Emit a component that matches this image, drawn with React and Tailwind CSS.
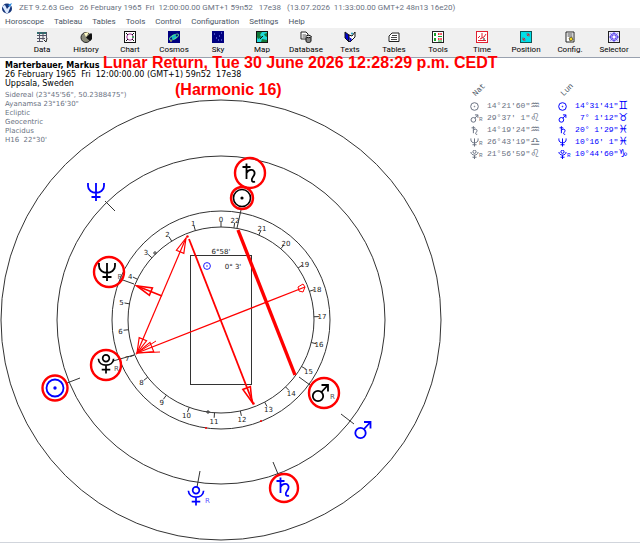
import clsx from 'clsx';

const MENU = ['Horoscope', 'Tableau', 'Tables', 'Tools', 'Control', 'Configuration', 'Settings', 'Help'];

const TOOLBAR = [
  'Data',
  'History',
  'Chart',
  'Cosmos',
  'Sky',
  'Map',
  'Database',
  'Texts',
  'Tables',
  'Tools',
  'Time',
  'Position',
  'Config.',
  'Selector',
];

const SETTINGS = ['Sidereal (23°45\'56", 50.2388475")', 'Ayanamsa 23°16\'30"', 'Ecliptic', 'Geocentric', 'Placidus', "H16  22°30'"];

const NATAL = [
  { planet: 'sun', pos: '14°21\'60"', sign: '♒' },
  { planet: 'mars', retro: true, pos: '29°37\' 1"', sign: '♌' },
  { planet: 'saturn', pos: '14°19\'24"', sign: '♒' },
  { planet: 'neptune', retro: true, pos: '26°43\'19"', sign: '♎' },
  { planet: 'pluto', retro: true, pos: '21°56\'59"', sign: '♌' },
];

const LUNAR = [
  { planet: 'sun', pos: '14°31\'41"', sign: '♊' },
  { planet: 'mars', pos: ' 7° 1\'12"', sign: '♉' },
  { planet: 'saturn', pos: '20° 1\'29"', sign: '♓' },
  { planet: 'neptune', pos: '10°16\' 1"', sign: '♓' },
  { planet: 'pluto', retro: true, pos: '10°44\'60"', sign: '♑' },
];

// Chart centre and the radii of the two scale rings
const CX = 221;
const CY = 320;
const R_INNER = 93;
const R_LABEL = 101;

const BLUE = '#0000ff';
const RED = '#ff0000';

// Symbols are drawn in a box of 20 x 20 around the origin
const PLANETS = {
  sun: (
    <>
      <circle r="8.5" />
      <circle r="0.8" />
    </>
  ),
  mars: (
    <>
      <circle cx="-2.5" cy="3" r="5.2" />
      <path d="M1 -1 L7.5 -8 M1 -8 H7.5 V-1.5" />
    </>
  ),
  saturn: <path d="M-6.5 -6 H1.5 M-2.5 -9.5 V6 M-2.5 0 C0 -5 6.500 -3.500 5.500 1 C5 4 1.500 5 3 8 Q4 9.500 6 8.500" />,
  neptune: <path d="M-8 -9 V-6 C-8 3 8 3 8 -6 V-9 M0 -9 V9 M-4.500 5 H4.500" />,
  pluto: (
    <>
      <circle cy="-6" r="3.5" />
      <path d="M-8 -5.500 C-7.500 3.500 7.500 3.500 8 -5.500 M0 1.500 V10 M-4.500 6 H4.500" />
    </>
  ),
};

function Planet({ name, x, y, scale = 1, color = 'black', width = 1.8 }) {
  return (
    <g transform={`translate(${x} ${y}) scale(${scale})`} fill="none" stroke={color} strokeWidth={width}>
      {PLANETS[name]}
    </g>
  );
}

function Ring({ x, y, r }) {
  return <circle cx={x} cy={y} r={r} fill="none" stroke={RED} strokeWidth="2.4" />;
}

function ArrowHead({ x, y, angle, length = 15, half = 4, width = 1.2 }) {
  return (
    <path
      d={`M0 0 L${-length} ${-half} V${half} Z`}
      transform={`translate(${x} ${y}) rotate(${angle})`}
      fill="none"
      stroke={RED}
      strokeWidth={width}
    />
  );
}

function Scale() {
  return Array.from({ length: 23 }, (_, n) => {
    const a = (n * 16 * Math.PI) / 180;
    const sin = Math.sin(a);
    const cos = Math.cos(a);
    return (
      <g key={n}>
        <line
          x1={CX - R_INNER * sin}
          y1={CY - R_INNER * cos}
          x2={CX - (R_INNER + 5) * sin}
          y2={CY - (R_INNER + 5) * cos}
          stroke="#333"
        />
        <text x={CX - R_LABEL * sin} y={CY - R_LABEL * cos + 3} textAnchor="middle">
          {n}
        </text>
      </g>
    );
  });
}

function Chart() {
  return (
    <svg
      viewBox="0 58 442 484"
      className="col-start-1 row-start-1 w-[442px] max-w-full"
      fontFamily="'DejaVu Sans', sans-serif"
      fontSize="7"
      fill="#222"
      role="img"
    >
      <g fill="none" stroke="#333">
        <circle cx={CX} cy={CY} r="220" />
        <circle cx={CX} cy={CY} r="164" />
        <circle cx={CX} cy={CY} r="109" />
        <circle cx={CX} cy={CY} r={R_INNER} />
        <rect x="190.5" y="255.5" width="61" height="129" />
        <path d="M105 201 L115 211 M67 383 L80 378 M200 471 L197 487 M273 462 L278 474 M341 414 L354 424" />
        <path d="M120 279 L134 284 M113 361 L134 355 M241 210 L237 228 M299 377 L310 385" />
        <circle cx="155" cy="253" r="1.2" />
        <circle cx="208" cy="412" r="1.2" />
      </g>
      <Scale />

      <g textAnchor="middle">
        <text x="221" y="254">6°58'</text>
        <text x="233" y="269">0° 3'</text>
        <text x="120" y="279" fill="#555">R</text>
      </g>
      <Planet name="sun" x={207} y={266} scale={0.4} color={BLUE} width={2.2} />

      <g stroke={RED} fill="none">
        <path d="M238 230 L295 375" strokeWidth="3.4" />
        <path d="M189 239 L253 403" strokeWidth="1.8" />
        <path d="M186 238 L137 353" strokeWidth="1.2" />
        <path d="M137 353 L305 287" strokeWidth="1.3" />
        <path d="M162 296 L137 286" strokeWidth="1.8" />
        <path d="M298 287 L303 284 L305 287 L303 292 L299 291 Z" />
        <path d="M137 353 L160 352 M137 353 L156 341" />
      </g>
      <ArrowHead x={186} y={238} angle={-67} />
      <ArrowHead x={137} y={353} angle={113} />
      <ArrowHead x={137} y={353} angle={158} length={16} half={5} />
      <ArrowHead x={137} y={286} angle={202} width={1.6} />
      <ArrowHead x={252} y={402} angle={69} width={1.6} />
      <g fill={RED}>
        <circle cx="187.500" cy="236.500" r="1.2" />
        <circle cx="253.500" cy="403.500" r="1.2" />
        <circle cx="206" cy="428" r="1" />
        <circle cx="261" cy="421" r="1" />
      </g>

      <Ring x={250} y={173} r={15} />
      <Planet name="saturn" x={249} y={173} />
      <Ring x={242} y={198} r={11} />
      <Planet name="sun" x={242} y={198} width={1.6} />
      <Ring x={109} y={272} r={15} />
      <Planet name="neptune" x={107} y={272} />
      <Ring x={106} y={365} r={15} />
      <Planet name="pluto" x={106} y={364} scale={0.95} />
      <text x="114" y="371" fill="#555">R</text>
      <Ring x={324} y={393} r={15} />
      <Planet name="mars" x={320.5} y={393} />
      <text x="330" y="399" fill="#555">R</text>

      <Planet name="neptune" x={96} y={192} color={BLUE} />
      <Ring x={55} y={388} r={12.500} />
      <Planet name="sun" x={55} y={388} color={BLUE} />
      <Planet name="pluto" x={196} y={496} scale={0.95} color={BLUE} />
      <text x="205" y="503" fill={BLUE} fillOpacity="0.7">R</text>
      <Ring x={284} y={488} r={14} />
      <Planet name="saturn" x={283} y={487} color={BLUE} />
      <Planet name="mars" x={363} y={430} color={BLUE} />
    </svg>
  );
}

// 12 x 12 toolbar pictures
const ICONS = {
  Data: (
    <>
      <rect x="1" y="1" width="10" height="2" fill="#2f6f6f" />
      <path d="M1 4.500 H11 M1 7.500 H9 M1 10.500 H7 M3.500 1 V11 M7 1 V9 M10.500 1 V7" stroke="#556" fill="none" />
      <path d="M8 9 L10 11 L11 7" stroke="#222" fill="none" />
    </>
  ),
  History: (
    <>
      <circle cx="6" cy="6.500" r="5" fill="#8b8b7a" stroke="#222" />
      <path d="M6 6.500 L11 2 A5 5 0 0 1 10 10 Z" fill="#111" />
      <path d="M6 6 L4 2 L9 1 Z" fill="#fff9c4" />
    </>
  ),
  Chart: (
    <>
      <rect x="0.5" y="0.5" width="11" height="11" fill="#fff" stroke="#111" />
      <circle cx="6" cy="6" r="3.200" fill="#fff" stroke="#a0309a" />
      <path d="M2 2 L4 4 M10 2 L8 4 M2 10 L4 8 M10 10 L8 8" stroke="#111" />
      <circle cx="9" cy="6" r="1" fill="#1a9b3c" />
    </>
  ),
  Cosmos: (
    <>
      <rect width="12" height="12" fill="#000080" />
      <circle cx="6" cy="6" r="2.500" fill="#15b8c8" />
      <ellipse cx="6" cy="6" rx="5" ry="1.800" transform="rotate(-30 6 6)" fill="none" stroke="#5fe08a" />
      <circle cx="3" cy="10" r="0.8" fill="#ffe14a" />
    </>
  ),
  Sky: (
    <>
      <rect width="12" height="12" fill="#000080" />
      <path d="M2 3 h1 M4 7 h1 M7 5 h1 M9 2 h1 M6 9 h1 M9 9 h1" stroke="#8fa0ff" />
    </>
  ),
  Map: (
    <>
      <rect x="0.5" y="0.5" width="11" height="11" fill="#20d8d8" stroke="#111" />
      <path d="M1 1 H6 L4 4 L6 6 L2 8 L1 6 Z M8 3 L11 2 V6 L9 5 Z M6 8 L11 9 V11 H5 Z" fill="#127a3a" />
      <path d="M4 8 L7 5" stroke="#111" />
    </>
  ),
  Database: (
    <>
      <path d="M1 1 H6 L8 3 V8 H1 Z" fill="#fff" stroke="#222" />
      <path d="M2.500 4 H6 M2.500 6 H5" stroke="#555" />
      <path d="M6 6 V10 C6 12 11 12 11 10 V5" fill="#888" stroke="#111" />
      <ellipse cx="8.500" cy="5.500" rx="2.500" ry="1.200" fill="#ddd" stroke="#111" />
    </>
  ),
  Texts: (
    <>
      <path d="M1 1 L5 4 V11 L1 7 Z" fill="#0000d0" stroke="#111" />
      <path d="M5 4 L8 5 L11 1 L11 6 L6 11 L5 10 Z" fill="#fff" stroke="#111" />
      <path d="M5 6 L8 8 L6 11 Z" fill="#0000d0" />
      <circle cx="8" cy="2.500" r="1" fill="#159fbf" />
    </>
  ),
  Tables: (
    <>
      <path d="M4 2 H11 V10.500 H1 V5 Z" fill="#fff" stroke="#222" />
      <path d="M4 4.500 H9 M3 6.500 H9 M3 8.500 H9" stroke="#444" />
    </>
  ),
  Tools: (
    <>
      <rect x="0.5" y="0.5" width="11" height="11" fill="#fff" stroke="#222" />
      <path d="M3 2 V5 M3 7 V10" stroke="#17a32b" strokeWidth="2" />
      <path d="M6 3 H10 M6 8 H10" stroke="#ef3340" strokeWidth="2" strokeDasharray="1.500 0.8" />
      <path d="M6 5.500 H10 M6 10 H10" stroke="#17a32b" />
    </>
  ),
  Time: (
    <>
      <rect x="0.5" y="0.5" width="11" height="11" fill="#fff" stroke="#e02030" />
      <path d="M6 2 V7 M2 7 L4 5 M4 8 L8 6 L10 3 M2 9.500 H10" stroke="#e02030" fill="none" />
      <path d="M8 7 V9" stroke="#222" />
    </>
  ),
  Position: (
    <>
      <rect x="0.5" y="0.5" width="11" height="11" fill="#00e0e8" stroke="#155" />
      <path d="M3 9 L5 7 M7 5 L9 3 M6.500 3 H9 V5.500 M3 6.500 V9 H5.500" stroke="#d02030" fill="none" />
    </>
  ),
  'Config.': (
    <>
      <path d="M2 1 H10 V11 H2 Z" fill="#fff" stroke="#222" />
      <path d="M3.500 3 H8.500 M3.500 5 H8.500" stroke="#444" />
      <path d="M5 7 L8 6 L9 9 L6 10 Z" fill="#f2d41c" stroke="#222" strokeWidth="0.6" />
    </>
  ),
  Selector: (
    <>
      <rect x="0.5" y="0.5" width="11" height="11" fill="#e9e9ff" stroke="#222" />
      <circle cx="6" cy="6" r="3.500" fill="none" stroke="#3b32e0" />
      <path d="M6 1 V11 M1 6 H11 M2.500 2.500 L9.500 9.500 M9.500 2.500 L2.500 9.500" stroke="#6a4df0" />
      <circle cx="6" cy="6" r="1.200" fill="#fff" />
    </>
  ),
};

function PositionTable({ title, rows, className }) {
  return (
    <table className={clsx("h-fit font-['Liberation_Mono',monospace] text-[8px] leading-3", className)}>
      <thead>
        <tr>
          <th className="h-5 p-0 pl-[2px] text-left align-middle font-normal text-gray-600" colSpan={3}>
            <span className="inline-block -rotate-45">{title}</span>
          </th>
        </tr>
      </thead>
      <tbody>
        {rows.map((row) => (
          <tr key={row.planet}>
            <td className="w-[17px] p-0">
              <span className="flex h-3 items-center">
                <svg viewBox="-10 -10 20 20" className="size-[9px]">
                  <Planet name={row.planet} x={0} y={0} color="currentColor" width={2.2} />
                </svg>
                {row.retro && <span className="pt-[3px] text-[6px] leading-[9px]">R</span>}
              </span>
            </td>
            <td className="h-3 p-0 whitespace-pre">{row.pos}</td>
            <td className="h-3 p-0 font-['DejaVu_Sans',sans-serif] text-[11px] leading-3">{row.sign + '\uFE0E'}</td>
          </tr>
        ))}
      </tbody>
    </table>
  );
}

export default function App() {
  return (
    <div className="min-h-screen bg-white font-['Roboto',sans-serif] text-[8px]">
      <header>
        <div className="flex h-[15px] items-center gap-[6px] pl-px text-gray-500">
          <svg viewBox="0 0 12 12" className="size-3">
            <circle cx="6" cy="6.500" r="5" fill="#16357a" />
            <path d="M1 4 L4 3 L6 7 L11 1 L7 11 H5 Z" fill="#dceaff" />
            <path d="M7 3 L11 1 L9 5 Z" fill="#2b8be0" />
          </svg>
          <h1 className="whitespace-pre">
            {'ZET 9.2.63 Geo   26 February 1965  Fri  12:00:00.00 GMT+1 59n52   17e38   (13.07.2026  11:33:00.00 GMT+2 48n13 16e20)'}
          </h1>
        </div>
        <nav className="flex h-[13px] items-center gap-[10px] pl-[5px] text-gray-600">
          {MENU.map((item) => (
            <button key={item} type="button" className="leading-3">
              {item}
            </button>
          ))}
        </nav>
        <div className="flex h-[30px] border-b border-gray-400 bg-[#f0f0f0] pr-1 pl-5">
          {TOOLBAR.map((item) => (
            <button
              key={item}
              type="button"
              className="flex flex-1 basis-0 flex-col items-center pt-[3px] leading-[14px] text-black"
            >
              <svg viewBox="0 0 12 12" className="size-3">
                {ICONS[item]}
              </svg>
              {item}
            </button>
          ))}
        </div>
      </header>

      <main className="relative flex border-b border-gray-300">
        <div className="grid">
          <Chart />
          <div className="col-start-1 row-start-1 pt-[3px] pl-[5px] font-['DejaVu_Sans',sans-serif] leading-[9px] whitespace-pre">
            <p className="font-bold">Marterbauer, Markus</p>
            <p>26 February 1965  Fri  12:00:00.00 (GMT+1) 59n52  17e38</p>
            <p>Uppsala, Sweden</p>
            <div className="pt-[3px] text-[7px] text-gray-500">
              {SETTINGS.map((line) => (
                <p key={line}>{line}</p>
              ))}
            </div>
          </div>
        </div>
        <h2 className="absolute top-[-9px] left-[103px] font-['Liberation_Sans',sans-serif] text-[16px] leading-[27px] font-bold whitespace-nowrap text-[#ff0000]">
          Lunar Return, Tue 30 June 2026 12:28:29 p.m. CEDT
          <span className="block pl-[72px]">(Harmonic 16)</span>
        </h2>
        <div className="flex flex-1 gap-[18px] pt-[22px] pl-7">
          <PositionTable title="Nat" rows={NATAL} className="text-gray-500" />
          <PositionTable title="Lun" rows={LUNAR} className="text-[#0000ff]" />
        </div>
      </main>
    </div>
  );
}
